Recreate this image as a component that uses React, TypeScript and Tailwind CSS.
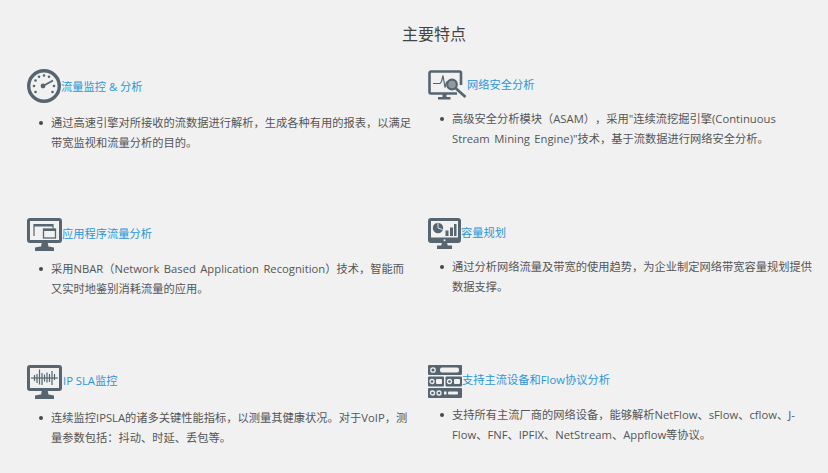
import React from 'react';

const slate = '#56656f';

const GaugeIcon = () => (
  <svg width="34" height="34" viewBox="1 1 34 34" fill="none">
    <circle cx="18" cy="18" r="15.3" stroke={slate} strokeWidth="3.400" />
    <g fill={slate}>
      <circle cx="8" cy="18" r="1.300" />
      <circle cx="9.500" cy="12.500" r="1.300" />
      <circle cx="13" cy="8.800" r="1.300" />
      <circle cx="18" cy="7.500" r="1.300" />
      <circle cx="23" cy="8.800" r="1.300" />
      <circle cx="28" cy="18" r="1.300" />
      <circle cx="9.500" cy="24" r="1.300" />
      <circle cx="26.500" cy="24" r="1.300" />
      <circle cx="17" cy="18" r="2.400" />
    </g>
    <path d="M17 18L27 12.500" stroke={slate} strokeWidth="1.800" />
  </svg>
);

const SearchMonitorIcon = () => (
  <svg width="39" height="30" viewBox="0 0 39 30" fill="none">
    <path d="M29 23.500H3A1.500 1.500 0 0 1 1.500 22V3A1.500 1.500 0 0 1 3 1.500h28.500A1.500 1.500 0 0 1 33 3v12" stroke={slate} strokeWidth="2.600" />
    <path d="M5 13.500h7l1.500-2 1.500-6 2 12 1.500-5.500h3" stroke={slate} strokeWidth="1.200" />
    <circle cx="24" cy="14.500" r="4.800" stroke={slate} strokeWidth="2.200" fill="#8f9ba3" />
    <path d="M28 18.500L37.500 27" stroke={slate} strokeWidth="2.800" />
    <path d="M14.500 24h4v3h-4zM10 27h12.500v2.500H10z" fill={slate} />
  </svg>
);

const WindowsMonitorIcon = () => (
  <svg width="35" height="34" viewBox="0 0 35 34" fill="none">
    <rect x="1.500" y="1.500" width="32" height="22" rx="1.500" stroke={slate} strokeWidth="3" />
    <path d="M7 18V6.500h19v4" stroke={slate} strokeWidth="1.200" />
    <path d="M7 6h19v2.500H7z" fill={slate} />
    <rect x="16.500" y="11" width="12" height="9" stroke={slate} strokeWidth="1.300" />
    <path d="M16.500 11h12v2h-12z" fill={slate} />
    <path d="M15 24h5.500l1 4.500H14zM8 29.500c3-1.500 16-1.500 19 0V33H8z" fill={slate} />
  </svg>
);

const ChartMonitorIcon = () => (
  <svg width="33" height="31" viewBox="0 0 33 31" fill="none">
    <path fillRule="evenodd" clipRule="evenodd" d="M3 0h27a3 3 0 0 1 3 3v19a3 3 0 0 1-3 3H3a3 3 0 0 1-3-3V3a3 3 0 0 1 3-3zM3 3v16.500h27V3z" fill={slate} />
    <circle cx="10" cy="10" r="5.200" fill={slate} />
    <path d="M10 10V5M10 10l4.500 1.500" stroke="#f1f1f1" strokeWidth="0.900" />
    <path d="M17.500 12.500h3V18h-3zM22 9.500h3V18h-3zM26 6h2.500v12H26z" fill={slate} />
    <path d="M14 25h5l1 3H13zM9 27.500h15V31H9z" fill={slate} />
    <circle cx="16.500" cy="22.300" r="1" fill="#f1f1f1" />
  </svg>
);

const WaveMonitorIcon = () => (
  <svg width="35" height="35" viewBox="0 0 35 35" fill="none">
    <rect x="1.500" y="1.500" width="32" height="23" rx="1.500" stroke={slate} strokeWidth="3" />
    <path d="M4 13h27" stroke={slate} strokeWidth="1.200" />
    <path d="M7.500 10v6M10 9v9M12.500 4.500v15M15 8v12M17.500 9.500v7M20 7.500v10M22.500 9v8M25 6v14M27.500 9v6" stroke={slate} strokeWidth="1.200" />
    <path d="M15 25h5.500l1 4.500H14zM8 30.500c3-1.500 16-1.500 19 0V34H8z" fill={slate} />
  </svg>
);

const ServerIcon = () => (
  <svg width="34" height="33" viewBox="0 0 34 33">
    <rect width="34" height="10" rx="1" fill={slate} />
    <rect y="11.500" width="16" height="10" rx="1" fill={slate} />
    <rect x="17.500" y="11.500" width="16.500" height="10" rx="1" fill={slate} />
    <rect y="23" width="34" height="10" rx="1" fill={slate} />
    <g fill="none" stroke="#f1f1f1" strokeWidth="1.300">
      <circle cx="5" cy="5" r="2.200" />
      <circle cx="4" cy="16.500" r="2" />
      <circle cx="21.500" cy="16.500" r="2" />
      <circle cx="4.500" cy="28" r="2" />
      <circle cx="11" cy="28" r="2" />
    </g>
    <g fill="#f1f1f1">
      <rect x="12" y="2.500" width="19" height="5" rx="2" />
      <rect x="8" y="14" width="6" height="5" rx="1" />
      <rect x="26" y="14" width="6" height="5" rx="1" />
      <rect x="16" y="26.500" width="2.500" height="3" />
      <rect x="20" y="26.500" width="10" height="3" rx="1" />
    </g>
  </svg>
);

interface Feature {
  title: string;
  icon: React.ReactNode;
  text: string;
  headerClass: string;
  titleClass: string;
  bodyClass: string;
}

const features: Feature[] = [
  {
    title: '流量监控 & 分析',
    icon: <GaugeIcon />,
    text: '通过高速引擎对所接收的流数据进行解析，生成各种有用的报表，以满足带宽监视和流量分析的目的。',
    headerClass: 'mt-px',
    titleClass: 'mt-[2px]',
    bodyClass: 'mt-[10px]',
  },
  {
    title: '网络安全分析',
    icon: <SearchMonitorIcon />,
    text: '高级安全分析模块（ASAM），采用"连续流挖掘引擎(Continuous Stream Mining Engine)"技术，基于流数据进行网络安全分析。',
    headerClass: 'mt-[2px]',
    titleClass: '',
    bodyClass: 'mt-[9px]',
  },
  {
    title: '应用程序流量分析',
    icon: <WindowsMonitorIcon />,
    text: '采用NBAR（Network Based Application Recognition）技术，智能而又实时地鉴别消耗流量的应用。',
    headerClass: 'mt-px',
    titleClass: 'mb-[2px]',
    bodyClass: 'mt-[7px]',
  },
  {
    title: '容量规划',
    icon: <ChartMonitorIcon />,
    text: '通过分析网络流量及带宽的使用趋势，为企业制定网络带宽容量规划提供数据支撑。',
    headerClass: 'mt-px',
    titleClass: 'mb-[2px]',
    bodyClass: 'mt-[8px]',
  },
  {
    title: 'IP SLA监控',
    icon: <WaveMonitorIcon />,
    text: '连续监控IPSLA的诸多关键性能指标，以测量其健康状况。对于VoIP，测量参数包括：抖动、时延、丢包等。',
    headerClass: '',
    titleClass: 'mb-[4px] ml-px',
    bodyClass: 'mt-[8px]',
  },
  {
    title: '支持主流设备和Flow协议分析',
    icon: <ServerIcon />,
    text: '支持所有主流厂商的网络设备，能够解析NetFlow、sFlow、cflow、J-Flow、FNF、IPFIX、NetStream、Appflow等协议。',
    headerClass: '',
    titleClass: 'mb-[4px]',
    bodyClass: 'mt-[7px]',
  },
];

const FeatureCard: React.FC<{ feature: Feature }> = ({ feature }) => (
  <div>
    <div className={`flex items-center ${feature.headerClass}`}>
      {feature.icon}
      <span className={`text-[11.25px] leading-5 text-[#2b96d8] ${feature.titleClass}`}>{feature.title}</span>
    </div>
    <div className={`flex pl-3 ${feature.bodyClass}`}>
      <span className="mt-[8px] h-1 w-1 shrink-0 rounded-full bg-[#3f4a52]" />
      <p className="ml-2 w-[362px] text-[11.25px] leading-5 text-[#555] [text-spacing-trim:space-all] [word-spacing:1.5px]">
        {feature.text}
      </p>
    </div>
  </div>
);

const App: React.FC = () => {
  return (
    <div
      className="h-[473px] w-[828px] overflow-hidden bg-[#f1f1f1] pt-[23px]"
      style={{ fontFamily: '"Open Sans", "Noto Sans CJK SC", sans-serif' }}
    >
      <h2 className="pl-[40px] text-center text-base leading-[22px] font-normal text-[#444]">主要特点</h2>
      <div className="mt-[23px] grid grid-cols-[401px_388px] grid-rows-[149px_148px_108px] pl-[27px]">
        {features.map((feature) => (
          <FeatureCard key={feature.title} feature={feature} />
        ))}
      </div>
    </div>
  );
};

export default App;
